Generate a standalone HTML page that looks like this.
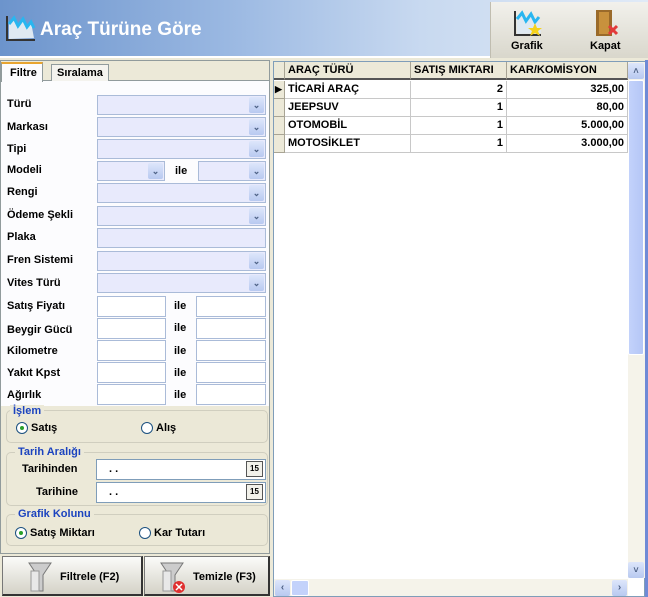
<!DOCTYPE html>
<html><head><meta charset="utf-8"><style>
*{box-sizing:border-box;margin:0;padding:0}
body{width:648px;height:597px;position:relative;overflow:hidden;background:#ece9d8;font-family:"Liberation Sans",sans-serif;font-size:11px;font-weight:bold;color:#000}
.a{position:absolute}
.hdr{left:0;top:0;width:648px;height:58px;background:linear-gradient(90deg,#6c94cc 0%,#9ab8e2 35%,#c8d9f0 65%,#e0eaf7 100%);border-bottom:2px solid #fff}
.tb{left:490px;top:2px;width:158px;height:56px;background:linear-gradient(#f2f1ec,#d9d7cc);border-left:1px solid #c0bdb0}
.lbl{position:absolute;left:7px;font-size:11px}
.f{position:absolute;height:20px;background:#e8eafc;border:1px solid #aabbd8}
.w{position:absolute;height:21px;background:#fff;border:1px solid #aabbd8}
.dd{position:absolute;right:1px;top:1px;width:15px;height:16px;background:linear-gradient(#dde6fb,#b8c9f0);border-radius:2px;color:#4d6185;font-size:9px;text-align:center;line-height:16px}
.ile{position:absolute;font-size:11px}
.grp{position:absolute;left:6px;width:262px;border:1px solid #d0cebf;border-radius:5px;background:#ebe8d7}
.gt{position:absolute;left:8px;top:-7px;color:#1b43bf;background:#ece9d8;padding:0 3px;font-size:11px}
.rad{position:absolute;width:12px;height:12px;border:1px solid #1c5180;border-radius:50%;background:#fff}
.rad.on::after{content:"";position:absolute;left:3px;top:3px;width:4px;height:4px;border-radius:50%;background:#2aa02a}
.btn{position:absolute;top:556px;height:40px;background:linear-gradient(#fbfbf9,#d4d2c7);border:1px solid #777;border-right:2px solid #333;border-bottom:2px solid #333}
.gr{left:273px;top:61px;width:372px;height:536px;background:#fff;border:1px solid #7f9db9}
.c{position:absolute;height:18px;line-height:17px;border-right:1px solid #c8c8c8;border-bottom:1px solid #c8c8c8;padding:0 3px;font-size:11px}
.h{background:#ece9d8;border-right:1px solid #a8a494;border-bottom:2px solid #555}
</style></head><body>
<div class="a hdr"></div>
<svg class="a" style="left:5px;top:14px" width="32" height="28"><polyline points="2,2 2,26 30,26" fill="none" stroke="#333" stroke-width="2"/><path d="M4,25 L4,10 L9,4 L13,12 L18,5 L22,13 L26,8 L29,24 Z" fill="#dfe9f2"/><path d="M4,10 L9,4 L13,12 L18,5 L22,13 L26,8 L29,14" fill="none" stroke="#29b6f0" stroke-width="3"/></svg>
<div class="a" style="left:40px;top:19px;color:#fff;font-size:19px;font-weight:bold">Araç Türüne Göre</div>
<div class="a tb"></div>
<svg class="a" style="left:513px;top:9px" width="32" height="28"><polyline points="2,2 2,26 28,26" fill="none" stroke="#333" stroke-width="2"/><path d="M4,25 L4,10 L9,4 L13,12 L18,5 L22,13 L26,8 L28,24 Z" fill="#dfe9f2"/><path d="M4,10 L9,4 L13,12 L18,5 L22,13 L26,8" fill="none" stroke="#29b6f0" stroke-width="3"/><polygon points="22,14 24,19 29,19 25,22 27,27 22,24 17,27 19,22 15,19 20,19" fill="#f6d21a"/></svg>
<div class="a" style="left:511px;top:40px;font-size:11px">Grafik</div>
<svg class="a" style="left:594px;top:8px" width="26" height="30"><rect x="2" y="2" width="16" height="26" fill="#9a6a2a"/><rect x="5" y="4" width="10" height="22" fill="#c8913d"/><path d="M15,18 L23,26 M23,18 L15,26" stroke="#e23a3a" stroke-width="3"/></svg>
<div class="a" style="left:590px;top:40px;font-size:11px">Kapat</div>

<div class="a" style="left:0;top:60px;width:270px;height:494px;border:1px solid #919b9c;background:#ece9d8"></div>
<div class="a" style="left:1px;top:80px;width:268px;height:473px;background:#fcfcfe;border-top:1px solid #919b9c"></div>
<div class="a" style="left:1px;top:62px;width:42px;height:20px;background:#fcfcfe;border:1px solid #919b9c;border-top:2px solid #e8a530;border-bottom:none;padding:3px 0 0 8px">Filtre</div>
<div class="a" style="left:51px;top:64px;width:58px;height:17px;background:#f4f3ee;border:1px solid #919b9c;border-bottom:none;padding:2px 0 0 5px">Sıralama</div>

<div class="lbl" style="top:98px">Türü</div><div class="f" style="left:97px;top:95px;width:169px"><div class="dd">⌄</div></div>
<div class="lbl" style="top:121px">Markası</div><div class="f" style="left:97px;top:117px;width:169px"><div class="dd">⌄</div></div>
<div class="lbl" style="top:143px">Tipi</div><div class="f" style="left:97px;top:139px;width:169px"><div class="dd">⌄</div></div>
<div class="lbl" style="top:164px">Modeli</div><div class="f" style="left:97px;top:161px;width:68px"><div class="dd">⌄</div></div><div class="ile" style="left:175px;top:165px">ile</div><div class="f" style="left:198px;top:161px;width:68px"><div class="dd">⌄</div></div>
<div class="lbl" style="top:186px">Rengi</div><div class="f" style="left:97px;top:183px;width:169px"><div class="dd">⌄</div></div>
<div class="lbl" style="top:209px">Ödeme Şekli</div><div class="f" style="left:97px;top:206px;width:169px"><div class="dd">⌄</div></div>
<div class="lbl" style="top:231px">Plaka</div><div class="f" style="left:97px;top:228px;width:169px"></div>
<div class="lbl" style="top:254px">Fren Sistemi</div><div class="f" style="left:97px;top:251px;width:169px"><div class="dd">⌄</div></div>
<div class="lbl" style="top:277px">Vites Türü</div><div class="f" style="left:97px;top:273px;width:169px"><div class="dd">⌄</div></div>
<div class="lbl" style="top:300px">Satış Fiyatı</div><div class="w" style="left:97px;top:296px;width:69px"></div><div class="ile" style="left:174px;top:300px">ile</div><div class="w" style="left:196px;top:296px;width:70px"></div>
<div class="lbl" style="top:324px">Beygir Gücü</div><div class="w" style="left:97px;top:318px;width:69px"></div><div class="ile" style="left:174px;top:322px">ile</div><div class="w" style="left:196px;top:318px;width:70px"></div>
<div class="lbl" style="top:345px">Kilometre</div><div class="w" style="left:97px;top:340px;width:69px"></div><div class="ile" style="left:174px;top:345px">ile</div><div class="w" style="left:196px;top:340px;width:70px"></div>
<div class="lbl" style="top:367px">Yakıt Kpst</div><div class="w" style="left:97px;top:362px;width:69px"></div><div class="ile" style="left:174px;top:367px">ile</div><div class="w" style="left:196px;top:362px;width:70px"></div>
<div class="lbl" style="top:389px">Ağırlık</div><div class="w" style="left:97px;top:384px;width:69px"></div><div class="ile" style="left:174px;top:389px">ile</div><div class="w" style="left:196px;top:384px;width:70px"></div>

<div class="a" style="left:1px;top:406px;width:268px;height:147px;background:#ece9d8"></div>
<div class="grp" style="top:410px;height:33px"><div class="gt" style="left:3px;top:-6px">İşlem</div>
<div class="rad on" style="left:9px;top:11px"></div><div class="a" style="left:24px;top:11px">Satış</div>
<div class="rad" style="left:134px;top:11px"></div><div class="a" style="left:149px;top:11px">Alış</div></div>
<div class="grp" style="top:452px;height:54px;background:#ece9d8"><div class="gt">Tarih Aralığı</div></div>
<div class="a" style="left:22px;top:463px">Tarihinden</div>
<div class="w" style="left:96px;top:459px;width:170px;border-color:#7f9db9;padding:3px 0 0 12px">. .<div class="a" style="right:2px;top:1px;width:17px;height:16px;border:1px solid #555;background:#f2f1ea;font-size:8px;text-align:center;line-height:14px">15</div></div>
<div class="a" style="left:36px;top:486px">Tarihine</div>
<div class="w" style="left:96px;top:482px;width:170px;border-color:#7f9db9;padding:3px 0 0 12px">. .<div class="a" style="right:2px;top:1px;width:17px;height:16px;border:1px solid #555;background:#f2f1ea;font-size:8px;text-align:center;line-height:14px">15</div></div>
<div class="grp" style="top:514px;height:32px"><div class="gt">Grafik Kolunu</div>
<div class="rad on" style="left:8px;top:12px"></div><div class="a" style="left:23px;top:12px">Satış Miktarı</div>
<div class="rad" style="left:132px;top:12px"></div><div class="a" style="left:147px;top:12px">Kar Tutarı</div></div>

<div class="btn" style="left:2px;width:141px"><svg class="a" style="left:24px;top:4px" width="26" height="32"><path d="M2,2 L24,2 L16,14 L16,30 L10,30 L10,14 Z" fill="#ccc" stroke="#777"/><rect x="4" y="10" width="8" height="20" fill="#e8e8e8" stroke="#999"/></svg><div class="a" style="left:57px;top:14px">Filtrele (F2)</div></div>
<div class="btn" style="left:144px;width:126px"><svg class="a" style="left:14px;top:4px" width="28" height="34"><path d="M2,2 L24,2 L16,14 L16,30 L10,30 L10,14 Z" fill="#ccc" stroke="#777"/><rect x="4" y="10" width="8" height="20" fill="#e8e8e8" stroke="#999"/><circle cx="20" cy="26" r="6" fill="#e03030"/><path d="M17,23 L23,29 M23,23 L17,29" stroke="#fff" stroke-width="1.5"/></svg><div class="a" style="left:48px;top:14px">Temizle (F3)</div></div>

<div class="a gr"></div>
<div class="c h" style="left:274px;top:62px;width:11px"></div>
<div class="c h" style="left:285px;top:62px;width:126px">ARAÇ TÜRÜ</div>
<div class="c h" style="left:411px;top:62px;width:96px">SATIŞ MIKTARI</div>
<div class="c h" style="left:507px;top:62px;width:121px">KAR/KOMİSYON</div>

<div class="c h" style="left:274px;top:81px;width:11px;border-bottom:1px solid #a8a494;font-size:9px;padding:0 1px">▶</div>
<div class="c" style="left:285px;top:81px;width:126px">TİCARİ ARAÇ</div><div class="c" style="left:411px;top:81px;width:96px;text-align:right">2</div><div class="c" style="left:507px;top:81px;width:121px;text-align:right">325,00</div>
<div class="c h" style="left:274px;top:99px;width:11px;border-bottom:1px solid #a8a494"></div>
<div class="c" style="left:285px;top:99px;width:126px">JEEPSUV</div><div class="c" style="left:411px;top:99px;width:96px;text-align:right">1</div><div class="c" style="left:507px;top:99px;width:121px;text-align:right">80,00</div>
<div class="c h" style="left:274px;top:117px;width:11px;border-bottom:1px solid #a8a494"></div>
<div class="c" style="left:285px;top:117px;width:126px">OTOMOBİL</div><div class="c" style="left:411px;top:117px;width:96px;text-align:right">1</div><div class="c" style="left:507px;top:117px;width:121px;text-align:right">5.000,00</div>
<div class="c h" style="left:274px;top:135px;width:11px;border-bottom:1px solid #a8a494"></div>
<div class="c" style="left:285px;top:135px;width:126px">MOTOSİKLET</div><div class="c" style="left:411px;top:135px;width:96px;text-align:right">1</div><div class="c" style="left:507px;top:135px;width:121px;text-align:right">3.000,00</div>

<div class="a" style="left:628px;top:62px;width:17px;height:516px;background:#f5f3ea"></div>
<div class="a" style="left:628px;top:63px;width:16px;height:16px;background:linear-gradient(#dde6fb,#b8c9f0);border-radius:2px;color:#4d6185;font-size:9px;text-align:center;line-height:16px">˄</div>
<div class="a" style="left:628px;top:80px;width:16px;height:275px;background:linear-gradient(90deg,#c3d2fb,#b4c6f6);border:1px solid #fff;border-radius:2px"></div>
<div class="a" style="left:628px;top:562px;width:16px;height:16px;background:linear-gradient(#dde6fb,#b8c9f0);border-radius:2px;color:#4d6185;font-size:9px;text-align:center;line-height:16px">˅</div>
<div class="a" style="left:274px;top:579px;width:354px;height:17px;background:#f5f3ea"></div>
<div class="a" style="left:275px;top:580px;width:15px;height:16px;background:linear-gradient(#dde6fb,#b8c9f0);border-radius:2px;color:#4d6185;font-size:10px;text-align:center;line-height:16px">‹</div>
<div class="a" style="left:291px;top:580px;width:18px;height:16px;background:#c3d2fb;border:1px solid #fff;border-radius:2px"></div>
<div class="a" style="left:612px;top:580px;width:15px;height:16px;background:linear-gradient(#dde6fb,#b8c9f0);border-radius:2px;color:#4d6185;font-size:10px;text-align:center;line-height:16px">›</div>
<div class="a" style="left:645px;top:60px;width:3px;height:537px;background:#6f8ad6"></div>
</body></html>
